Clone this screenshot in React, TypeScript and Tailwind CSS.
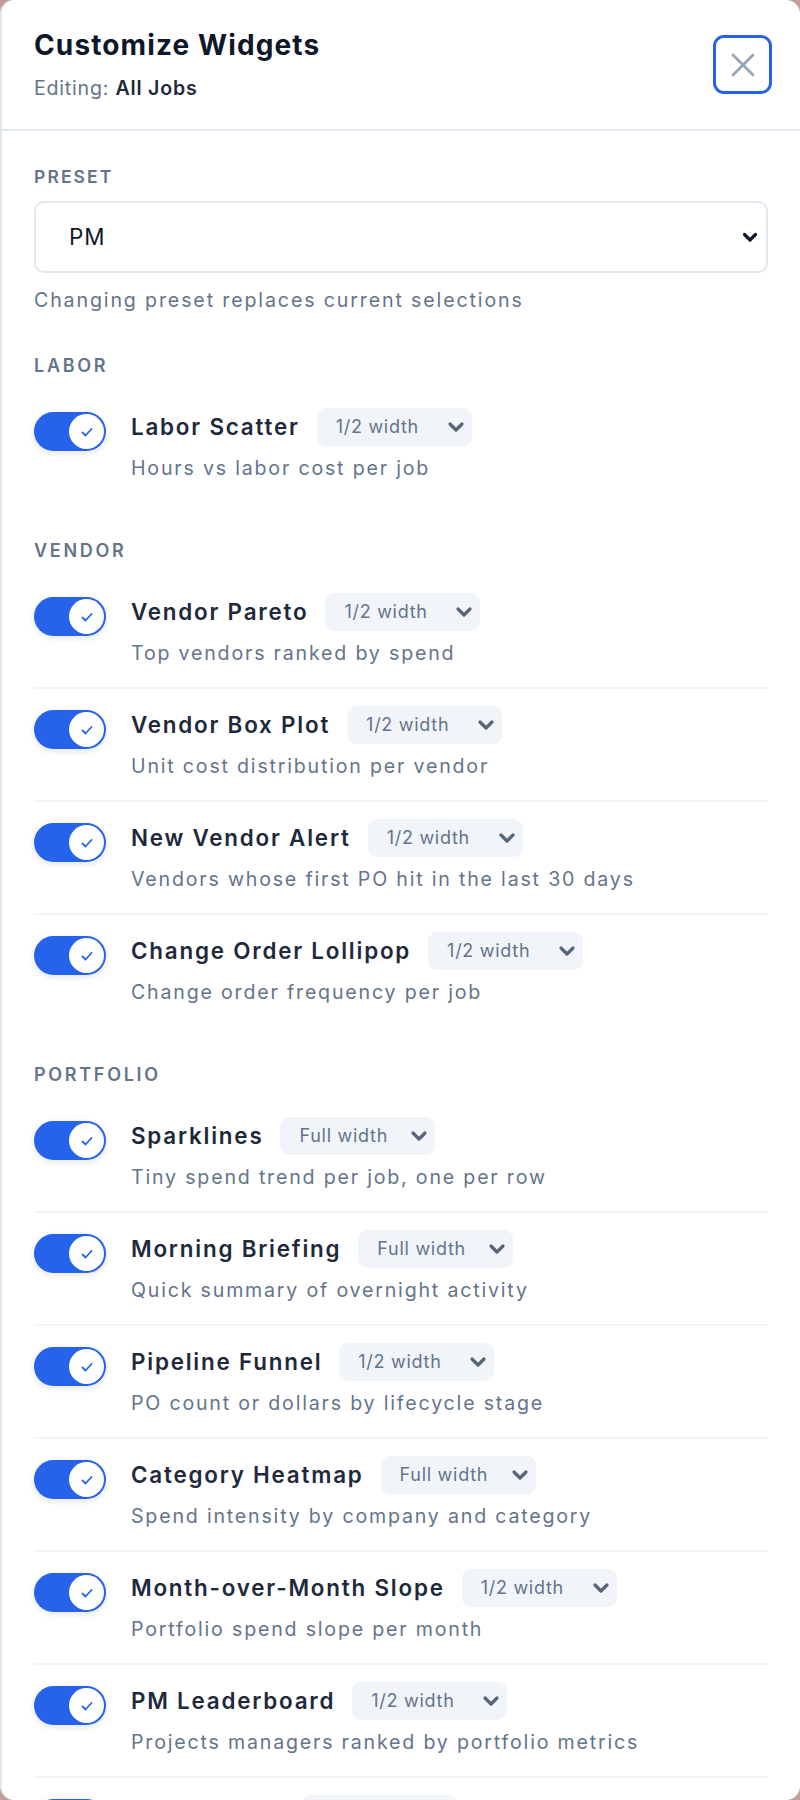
import React from "react";

type Widget = {
  name: string;
  width: "1/2 width" | "Full width";
  desc: string;
};

type Section = {
  label: string;
  items: Widget[];
};

const sections: Section[] = [
  {
    label: "Labor",
    items: [{ name: "Labor Scatter", width: "1/2 width", desc: "Hours vs labor cost per job" }],
  },
  {
    label: "Vendor",
    items: [
      { name: "Vendor Pareto", width: "1/2 width", desc: "Top vendors ranked by spend" },
      { name: "Vendor Box Plot", width: "1/2 width", desc: "Unit cost distribution per vendor" },
      { name: "New Vendor Alert", width: "1/2 width", desc: "Vendors whose first PO hit in the last 30 days" },
      { name: "Change Order Lollipop", width: "1/2 width", desc: "Change order frequency per job" },
    ],
  },
  {
    label: "Portfolio",
    items: [
      { name: "Sparklines", width: "Full width", desc: "Tiny spend trend per job, one per row" },
      { name: "Morning Briefing", width: "Full width", desc: "Quick summary of overnight activity" },
      { name: "Pipeline Funnel", width: "1/2 width", desc: "PO count or dollars by lifecycle stage" },
      { name: "Category Heatmap", width: "Full width", desc: "Spend intensity by company and category" },
      { name: "Month-over-Month Slope", width: "1/2 width", desc: "Portfolio spend slope per month" },
      { name: "PM Leaderboard", width: "1/2 width", desc: "Projects managers ranked by portfolio metrics" },
      { name: "Budget Burn", width: "1/2 width", desc: "Committed spend against budget per job" },
    ],
  },
];

function Toggle() {
  return (
    <span className="mt-[4px] flex h-[39px] w-[72px] shrink-0 items-center justify-end rounded-full bg-[#2563eb] pr-[2px] shadow-[0_2px_6px_rgba(15,23,42,0.12)]">
      <span className="flex h-[35px] w-[35px] items-center justify-center rounded-full bg-white">
        <svg width="16" height="16" viewBox="0 0 16 16" fill="none">
          <path d="M3.5 8.5l3 3 6-6.5" stroke="#2563eb" strokeWidth="1.8" strokeLinecap="round" strokeLinejoin="round" />
        </svg>
      </span>
    </span>
  );
}

function WidthSelect({ value }: { value: string }) {
  return (
    <span className="flex h-[38px] w-[155px] shrink-0 items-center justify-between rounded-[9px] bg-[#f1f5f9] pl-[19px] pr-[7px]">
      <span className="text-[18px] leading-none tracking-[0.04em] text-[#64748b]">{value}</span>
      <svg width="18" height="12" viewBox="0 0 18 12" fill="none">
        <path d="M3 3l6 6 6-6" stroke="#56657a" strokeWidth="3.2" strokeLinecap="round" strokeLinejoin="round" />
      </svg>
    </span>
  );
}

function WidgetRow({ item, first }: { item: Widget; first: boolean }) {
  return (
    <div className={"flex items-start gap-[25px] pt-[17px] pb-[20px] " + (first ? "" : "border-t-2 border-[#f1f5f9]")}>
      <Toggle />
      <div className="flex flex-col">
        <div className="flex h-[38px] items-center gap-[17px]">
          <span className="whitespace-nowrap text-[22.4px] font-semibold leading-none tracking-[0.08em] text-[#1e293b]">
            {item.name}
          </span>
          <WidthSelect value={item.width} />
        </div>
        <p className="mt-[8px] whitespace-nowrap text-[19.6px] leading-[28px] tracking-[0.092em] text-[#64748b]">{item.desc}</p>
      </div>
    </div>
  );
}

export default function App() {
  return (
    <div className="h-[1800px] w-[800px] bg-[#c49c9c] font-['Inter',sans-serif]">
      <div className="flex h-full flex-col overflow-hidden rounded-[14px] border-l-2 border-[#e2e8f0] bg-white">
        <div className="flex h-[131px] shrink-0 items-center justify-between border-b-2 border-[#e2e8f0] pl-[32px] pr-[28px]">
          <div>
            <h1 className="text-[28px] font-bold leading-[36px] tracking-[0.04em] text-[#0f172a]">Customize Widgets</h1>
            <p className="mt-[11px] text-[19.6px] leading-[28px] tracking-[0.04em] text-[#64748b]">
              Editing: <span className="font-semibold text-[#1e293b]">All Jobs</span>
            </p>
          </div>
          <button className="flex h-[59px] w-[59px] items-center justify-center rounded-[11px] border-[3px] border-[#2563eb]">
            <svg width="24" height="24" viewBox="0 0 24 24" fill="none">
              <path d="M2 2l20 20M22 2L2 22" stroke="#94a3b8" strokeWidth="2.6" strokeLinecap="round" />
            </svg>
          </button>
        </div>

        <div className="px-[32px] pt-[34px]">
          <div className="text-[17.5px] font-semibold uppercase leading-[24px] tracking-[0.12em] text-[#64748b]">Preset</div>
          <div className="mt-[12px] flex h-[72px] items-center justify-between rounded-[10px] border-2 border-[#e2e8f0] pl-[33px] pr-[8px]">
            <span className="text-[22.4px] tracking-[0.04em] text-[#0f172a]">PM</span>
            <svg width="16" height="12" viewBox="0 0 16 12" fill="none">
              <path d="M2.5 3.5l5.5 5.5 5.5-5.5" stroke="#0f172a" strokeWidth="3.2" strokeLinecap="round" strokeLinejoin="round" />
            </svg>
          </div>
          <p className="mt-[13px] whitespace-nowrap text-[19.6px] leading-[28px] tracking-[0.095em] text-[#64748b]">
            Changing preset replaces current selections
          </p>

          {sections.map((section, si) => (
            <div key={section.label} className={si === 0 ? "mt-[40px]" : "mt-[37px]"}>
              <div className="mb-[13px] text-[18px] font-semibold uppercase leading-[24px] tracking-[0.15em] text-[#64748b]">
                {section.label}
              </div>
              {section.items.map((item, i) => (
                <WidgetRow key={item.name} item={item} first={i === 0} />
              ))}
            </div>
          ))}
        </div>
      </div>
    </div>
  );
}
